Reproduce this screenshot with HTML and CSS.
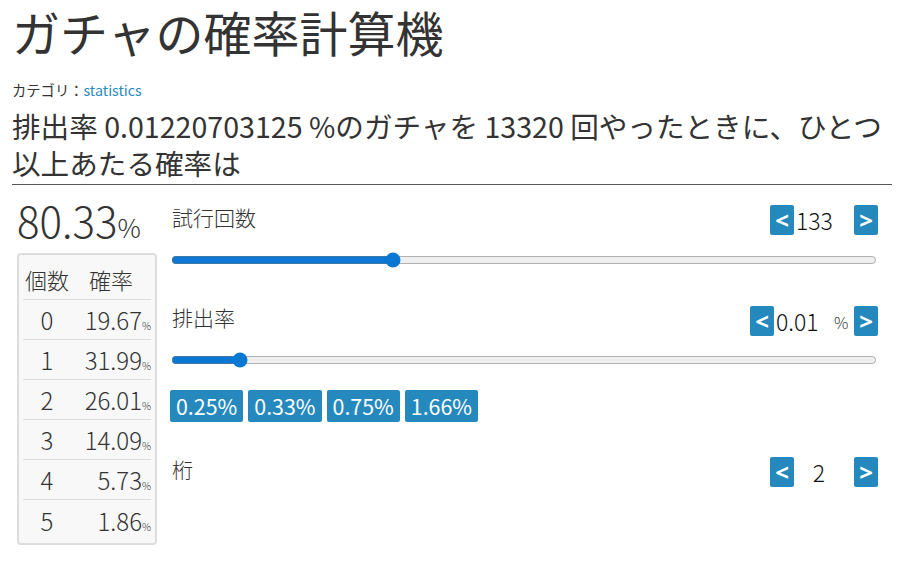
FILE: index.html
```html
<!DOCTYPE html>
<html lang="ja">
<head>
<meta charset="utf-8">
<link rel="stylesheet" href="styles.css">
</head>
<body>
<div class="page">
  <h1 class="title">ガチャの確率計算機</h1>
  <div class="category">カテゴリ：<a class="cat-link" href="#">statistics</a></div>
  <h2 class="question">排出率 0.01220703125 %のガチャを 13320 回やったときに、ひとつ以上あたる確率は</h2>
  <div class="main">
    <div class="left">
      <div class="result"><span class="result-num">80.33</span><span class="result-pct">%</span></div>
      <div class="dist">
        <div class="dist-row dist-head"><span class="c-n">個数</span><span class="c-p">確率</span></div>
        <div class="dist-row"><span class="c-n">0</span><span class="c-p">19.67<span class="pct">%</span></span></div>
        <div class="dist-row"><span class="c-n">1</span><span class="c-p">31.99<span class="pct">%</span></span></div>
        <div class="dist-row"><span class="c-n">2</span><span class="c-p">26.01<span class="pct">%</span></span></div>
        <div class="dist-row"><span class="c-n">3</span><span class="c-p">14.09<span class="pct">%</span></span></div>
        <div class="dist-row"><span class="c-n">4</span><span class="c-p">5.73<span class="pct">%</span></span></div>
        <div class="dist-row"><span class="c-n">5</span><span class="c-p">1.86<span class="pct">%</span></span></div>
      </div>
    </div>
    <div class="right">
      <div class="field field-trials">
        <div class="field-head">
          <span class="label">試行回数</span>
          <div class="stepper">
            <button class="btn">&lt;</button><span class="val">133</span><button class="btn">&gt;</button>
          </div>
        </div>
        <input class="range" type="range" min="0" max="1000" value="310">
      </div>
      <div class="field field-rate">
        <div class="field-head">
          <span class="label">排出率</span>
          <div class="stepper">
            <button class="btn">&lt;</button><span class="val">0.01</span><span class="unit">%</span><button class="btn">&gt;</button>
          </div>
        </div>
        <input class="range" type="range" min="0" max="1000" value="89">
        <div class="presets">
          <button class="preset">0.25%</button><button class="preset">0.33%</button><button class="preset">0.75%</button><button class="preset">1.66%</button>
        </div>
      </div>
      <div class="field field-digits">
        <div class="field-head">
          <span class="label">桁</span>
          <div class="stepper">
            <button class="btn">&lt;</button><span class="val val-center">2</span><button class="btn">&gt;</button>
          </div>
        </div>
      </div>
    </div>
  </div>
</div>
</body>
</html>
```

FILE: styles.css
```css
html, body {
  margin: 0;
  padding: 0;
  background: #fff;
}
body {
  font-family: "Noto Sans CJK JP", "Noto Sans", sans-serif;
  color: #333;
}
.page {
  width: 880px;
  padding: 0 12px;
}
.title {
  margin: 0;
  padding-top: 1px;
  font-size: 48px;
  font-weight: 400;
  line-height: 60px;
  color: #333;
}
.category {
  margin-top: 19px;
  font-size: 14.3px;
  line-height: 20px;
  color: #333;
}
.cat-link {
  color: #2a8ac1;
  text-decoration: none;
}
.question {
  margin: 7px 0 0;
  font-size: 28.6px;
  font-weight: 400;
  line-height: 37px;
  padding-bottom: 3px;
  border-bottom: 1px solid #555;
}
.main {
  display: flex;
  gap: 13px;
  padding: 20px 14px 0 5px;
}
.left {
  width: 140px;
  flex: none;
}
.result {
  display: flex;
  align-items: baseline;
  height: 30px;
  font-weight: 300;
  color: #333;
  white-space: nowrap;
}
.result-num {
  font-size: 42px;
  line-height: 30px;
}
.result-pct {
  font-size: 26px;
  line-height: 30px;
}
.dist {
  margin-top: 18px;
  border: 2px solid #ddd;
  border-radius: 4px;
  background: #f8f8f8;
  padding: 0 4px 3px;
}
.dist-row {
  display: flex;
  align-items: center;
  height: 40px;
  box-sizing: border-box;
  border-bottom: 1px solid #ddd;
  font-size: 24px;
  font-weight: 300;
}
.dist-row:last-child {
  border-bottom: none;
}
.dist-head {
  height: 45px;
  padding-top: 3px;
  font-size: 22px;
}
.c-n {
  width: 48px;
  text-align: center;
}
.c-p {
  flex: 1;
  text-align: right;
}
.dist-head .c-p {
  text-align: center;
}
.pct {
  font-size: 10px;
}
.right {
  flex: 1;
}
.field-head {
  display: flex;
  justify-content: space-between;
  align-items: flex-start;
  height: 30px;
}
.label {
  font-size: 21px;
  font-weight: 300;
  line-height: 24px;
  color: #333;
  padding-left: 2px;
}
.stepper {
  display: flex;
  align-items: center;
}
.btn {
  width: 24px;
  height: 30px;
  padding: 0;
  border: none;
  border-radius: 2px;
  background: #2589bd;
  color: #fff;
  font-family: "Noto Sans", sans-serif;
  font-weight: 700;
  font-size: 24px;
  line-height: 30px;
}
.val {
  width: 60px;
  box-sizing: border-box;
  padding-left: 2px;
  font-size: 23px;
  font-weight: 300;
  line-height: 30px;
  color: #111;
}
.val-center {
  text-align: center;
  padding: 0 10px 0 0;
}
.unit {
  width: 20px;
  font-size: 16px;
  font-weight: 300;
  line-height: 30px;
  color: #333;
  padding-top: 2px;
}
.range {
  display: block;
  width: 706px;
  height: 16px;
  margin: 17px 0 0 1px;
  accent-color: #0a78d2;
}
.field-trials {
  margin-bottom: 37px;
}
.presets {
  display: flex;
  gap: 5px;
  margin-top: 22px;
}
.preset {
  border: none;
  border-radius: 2px;
  background: #2589bd;
  color: #fff;
  font-family: "Noto Sans CJK JP", sans-serif;
  font-size: 21.4px;
  line-height: 32px;
  height: 32px;
  padding: 0 6px;
}
.field-rate {
  margin-bottom: 35px;
}
```
